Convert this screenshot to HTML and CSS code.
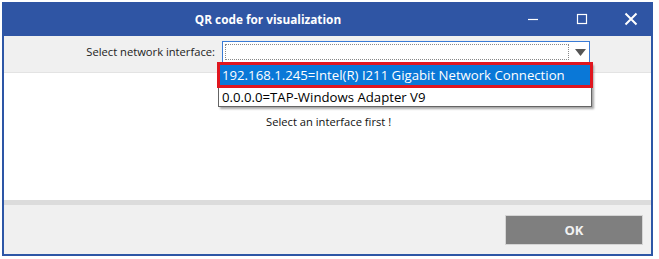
FILE: index.html
```html
<!DOCTYPE html>
<html lang="en">
<head>
    <meta charset="UTF-8">
    <title>QR code for visualization</title>
    <link rel="stylesheet" href="styles.css">
</head>
<body>
    <div class="window">
        <div class="titlebar">
            <div class="title">QR code for visualization</div>
            <div class="controls">
                <span class="ctl">
                    <svg width="12" height="12" viewBox="0 0 12 12"><path d="M1 6.5h10" stroke="#fff" stroke-width="1.2"/></svg>
                </span>
                <span class="ctl">
                    <svg width="12" height="12" viewBox="0 0 12 12"><rect x="1.5" y="1.5" width="9" height="9" fill="none" stroke="#fff" stroke-width="1.2"/></svg>
                </span>
                <span class="ctl">
                    <svg width="14" height="14" viewBox="0 0 14 14"><path d="M1.5 1.5l11 11M12.5 1.5l-11 11" stroke="#fff" stroke-width="2"/></svg>
                </span>
            </div>
        </div>

        <div class="toolbar">
            <label class="field-label">Select network interface:</label>
            <div class="combo">
                <div class="combo-text"></div>
                <div class="combo-arrow">
                    <svg width="11" height="7" viewBox="0 0 11 7"><path d="M0 0h11L5.5 7z" fill="#555"/></svg>
                </div>
                <ul class="dropdown">
                    <li class="item selected">192.168.1.245=Intel(R) I211 Gigabit Network Connection</li>
                    <li class="item">0.0.0.0=TAP-Windows Adapter V9</li>
                </ul>
            </div>
        </div>

        <div class="content">
            <p class="message">Select an interface first !</p>
        </div>

        <div class="footer">
            <button class="btn-ok">OK</button>
        </div>
    </div>
</body>
</html>
```

FILE: styles.css
```css
body {
    margin: 0;
    padding: 0;
    background-color: #fff;
    font-family: "Open Sans", "Noto Sans", Arial, sans-serif;
}
.window {
    margin: 2px 0 0 2px;
    width: 651px;
    height: 254px;
    border: 2px solid #2d56a6;
    border-top: none;
    background-color: #f0f0f0;
    display: flex;
    flex-direction: column;
    box-sizing: border-box;
}
.titlebar {
    height: 34px;
    background-color: #2f55a4;
    display: flex;
    align-items: center;
}
.title {
    flex: 1;
    text-align: center;
    color: #fff;
    font-weight: bold;
    font-size: 11.8px;
    padding-left: 134px;
    box-sizing: border-box;
}
.controls {
    display: flex;
    align-items: center;
    margin-left: 106px;
}
.ctl {
    width: 49px;
    height: 34px;
    padding-left: 8px;
    box-sizing: border-box;
    display: flex;
    align-items: center;
    justify-content: center;
}
.toolbar {
    height: 37px;
    display: flex;
    align-items: flex-start;
    padding-top: 5px;
    box-sizing: border-box;
    border-bottom: 1px solid #e3e3e3;
}
.field-label {
    width: 211px;
    text-align: right;
    font-size: 11.2px;
    color: #222;
    line-height: 22px;
    margin-right: 7px;
}
.combo {
    position: relative;
    width: 368px;
    height: 22px;
    background-color: #fff;
    border: 1px solid #3a7bd5;
    box-sizing: border-box;
    display: flex;
}
.combo-text {
    flex: 1;
    margin: 2px;
    border: 1px dotted #888;
}
.combo-arrow {
    width: 18px;
    display: flex;
    align-items: center;
    justify-content: center;
}
.dropdown {
    position: absolute;
    left: -5px;
    top: 21px;
    width: 372px;
    margin: 0;
    padding: 0;
    list-style: none;
    background-color: #fff;
    border: 1px solid #646464;
    box-shadow: 2px 2px 2px rgba(0,0,0,0.35);
    font-size: 13.2px;
}
.item {
    height: 17px;
    line-height: 17px;
    padding-left: 3px;
    color: #000;
    white-space: nowrap;
}
.item.selected {
    background-color: #0a78d7;
    color: #fff;
    height: 22px;
    line-height: 23px;
    outline: 3px solid #e0161f;
    outline-offset: -1px;
    margin-bottom: 3px;
}
.content {
    flex: 1;
    background-color: #fff;
    border-bottom: 5px solid #dcdcdc;
}
.message {
    margin: 41px 0 0 262px;
    font-size: 11.2px;
    color: #111;
}
.footer {
    height: 49px;
    display: flex;
    justify-content: flex-end;
    align-items: center;
    padding-right: 8px;
}
.btn-ok {
    width: 138px;
    height: 30px;
    background-color: #7f7f7f;
    border: 1px solid #d4d4d4;
    color: #f2f2f2;
    font-family: "Open Sans", "Noto Sans", Arial, sans-serif;
    font-weight: bold;
    font-size: 13px;
    cursor: pointer;
}
```
